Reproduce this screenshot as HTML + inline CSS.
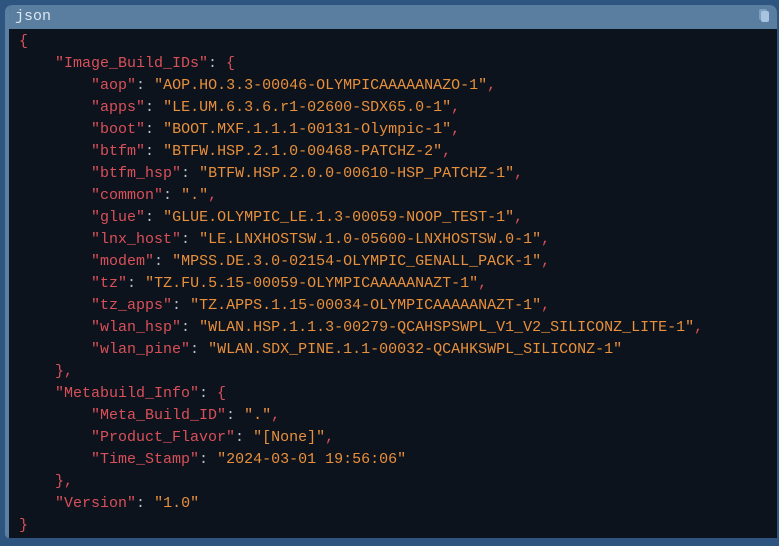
<!DOCTYPE html>
<html><head><meta charset="utf-8"><style>
html,body{margin:0;padding:0;width:779px;height:546px;background:#2d5580;overflow:hidden}
.card{position:absolute;left:5px;top:5px;width:768px;height:533px;background:#0d131c;border-left:4px solid #5b80a3;border-radius:7px 7px 0 4px;overflow:hidden}
.hdr{height:24px;background:#5a7e9f;position:relative}
.hdr span{position:absolute;left:6px;top:3px;font:15px "Liberation Mono",monospace;color:#dbe6f0}
.cp{position:absolute;right:8px;top:6px;width:8px;height:11px;background:#a9c4e0;border-radius:2px;box-shadow:-2px -2px 0 0 #7f9fc0}
pre{margin:0;padding:2px 0 0 10px;font:15px/22px "Liberation Mono",monospace;color:#d9505a}
.s{color:#e8903c}i{font-style:normal;color:#b8c0c8}
</style></head><body><div class="card"><div class="hdr"><span>json</span><div class="cp"></div></div>
<pre>{
    "Image_Build_IDs"<i>:</i> {
        "aop"<i>:</i> <span class="s">"AOP.HO.3.3-00046-OLYMPICAAAAANAZO-1"</span>,
        "apps"<i>:</i> <span class="s">"LE.UM.6.3.6.r1-02600-SDX65.0-1"</span>,
        "boot"<i>:</i> <span class="s">"BOOT.MXF.1.1.1-00131-Olympic-1"</span>,
        "btfm"<i>:</i> <span class="s">"BTFW.HSP.2.1.0-00468-PATCHZ-2"</span>,
        "btfm_hsp"<i>:</i> <span class="s">"BTFW.HSP.2.0.0-00610-HSP_PATCHZ-1"</span>,
        "common"<i>:</i> <span class="s">"."</span>,
        "glue"<i>:</i> <span class="s">"GLUE.OLYMPIC_LE.1.3-00059-NOOP_TEST-1"</span>,
        "lnx_host"<i>:</i> <span class="s">"LE.LNXHOSTSW.1.0-05600-LNXHOSTSW.0-1"</span>,
        "modem"<i>:</i> <span class="s">"MPSS.DE.3.0-02154-OLYMPIC_GENALL_PACK-1"</span>,
        "tz"<i>:</i> <span class="s">"TZ.FU.5.15-00059-OLYMPICAAAAANAZT-1"</span>,
        "tz_apps"<i>:</i> <span class="s">"TZ.APPS.1.15-00034-OLYMPICAAAAANAZT-1"</span>,
        "wlan_hsp"<i>:</i> <span class="s">"WLAN.HSP.1.1.3-00279-QCAHSPSWPL_V1_V2_SILICONZ_LITE-1"</span>,
        "wlan_pine"<i>:</i> <span class="s">"WLAN.SDX_PINE.1.1-00032-QCAHKSWPL_SILICONZ-1"</span>
    },
    "Metabuild_Info"<i>:</i> {
        "Meta_Build_ID"<i>:</i> <span class="s">"."</span>,
        "Product_Flavor"<i>:</i> <span class="s">"[None]"</span>,
        "Time_Stamp"<i>:</i> <span class="s">"2024-03-01 19:56:06"</span>
    },
    "Version"<i>:</i> <span class="s">"1.0"</span>
}</pre></div></body></html>
